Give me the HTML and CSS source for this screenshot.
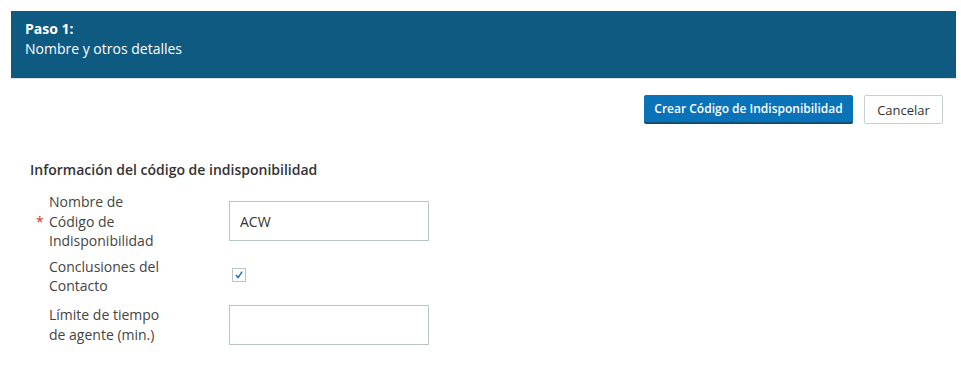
FILE: index.html
```html
<!DOCTYPE html>
<html lang="es">
<head>
<meta charset="utf-8">
<link rel="stylesheet" href="styles.css">
</head>
<body>
<div class="page">
  <header class="step">
    <div class="step-num">Paso 1:</div>
    <div class="step-title">Nombre y otros detalles</div>
  </header>
  <div class="actions">
    <button class="btn btn-primary">Crear Código de Indisponibilidad</button>
    <button class="btn btn-secondary">Cancelar</button>
  </div>
  <section class="section">
    <h2 class="section-title">Información del código de indisponibilidad</h2>
    <div class="form">
      <div class="row">
        <div class="label-wrap"><span class="req">*</span><label class="label">Nombre de Código de Indisponibilidad</label></div>
        <div class="field"><input class="input" type="text" value="ACW"></div>
      </div>
      <div class="row row-check">
        <div class="label-wrap"><span class="req"></span><label class="label">Conclusiones del Contacto</label></div>
        <div class="field"><span class="checkbox"><svg width="10" height="10" viewBox="0 0 10 10"><path d="M2.3 5.4 L4.1 7.6 L7.8 2.2" fill="none" stroke="#1a6fb5" stroke-width="1.5" stroke-linecap="round" stroke-linejoin="round"/></svg></span></div>
      </div>
      <div class="row">
        <div class="label-wrap"><span class="req"></span><label class="label">Límite de tiempo de agente (min.)</label></div>
        <div class="field"><input class="input" type="text" value=""></div>
      </div>
    </div>
  </section>
</div>
</body>
</html>
```
FILE: styles.css
```css
* { box-sizing: border-box; }
html, body { margin: 0; padding: 0; background: #fff; }
body {
  font-family: "Open Sans", "Noto Sans", sans-serif;
  color: #333;
  font-size: 14px;
}
.page { padding: 11px 5px 0 11px; }
.step {
  background: #0f5a80;
  color: #fff;
  padding: 8px 14px 0 14px;
  border-bottom: 1px solid #dde3e8;
  line-height: 20px;
  box-sizing: content-box;
  height: 59px;
}
.step-num { font-weight: 700; font-size: 14px; }
.step-title { font-size: 14px; }
.actions {
  display: flex;
  justify-content: flex-end;
  gap: 11px;
  padding: 16px 13px 0 0;
}
.btn {
  font-family: "Open Sans", "Noto Sans", sans-serif;
  font-size: 12px;
  height: 29px;
  border-radius: 2px;
  cursor: pointer;
  white-space: nowrap;
}
.btn-primary {
  background: #0a73b8;
  color: #fff;
  font-weight: 600;
  border: none;
  border-bottom: 2px solid #0b4e78;
  padding: 0;
  width: 209px;
}
.btn-secondary {
  background: #fff;
  color: #333;
  border: 1px solid #c8d0d6;
  width: 79px;
  padding: 0;
  font-size: 13px;
}
.section { padding: 36px 0 0 19px; }
.section-title {
  margin: 0;
  font-size: 14px;
  font-weight: 600;
  line-height: 20px;
}
.form { padding-top: 12px; }
.row {
  display: flex;
  align-items: center;
  margin-bottom: 6px;
}
.row-check { margin-bottom: 9px; }
.label-wrap {
  display: flex;
  align-items: center;
  width: 199px;
  padding-left: 6px;
}
.req {
  color: #d0342c;
  width: 13px;
  font-size: 14px;
  flex: none;
}
.label {
  width: 116px;
  line-height: 19.5px;
  font-size: 14px;
  color: #444;
}
.input {
  width: 200px;
  height: 40px;
  border: 1px solid #b9c6cf;
  border-radius: 0;
  font-family: "Open Sans", "Noto Sans", sans-serif;
  font-size: 14px;
  color: #333;
  padding: 0 10px;
  outline: none;
}
.checkbox {
  display: flex;
  align-items: center;
  justify-content: center;
  width: 14px;
  height: 14px;
  border: 1px solid #b9c6cf;
  margin-left: 3px;
  margin-bottom: 3px;
}
```
